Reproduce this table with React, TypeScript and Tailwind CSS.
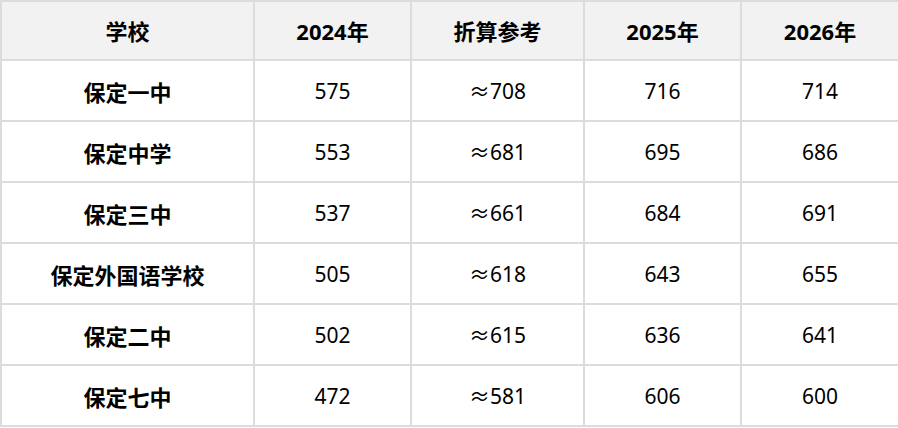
import React from 'react';

const rows = [
  ['保定一中', '575', '≈708', '716', '714'],
  ['保定中学', '553', '≈681', '695', '686'],
  ['保定三中', '537', '≈661', '684', '691'],
  ['保定外国语学校', '505', '≈618', '643', '655'],
  ['保定二中', '502', '≈615', '636', '641'],
  ['保定七中', '472', '≈581', '606', '600'],
];

const headers = ['学校', '2024年', '折算参考', '2025年', '2026年'];
const colWidths = ['w-[253px]', 'w-[157px]', 'w-[173px]', 'w-[157px]', 'w-[158px]'];

const App: React.FC = () => {
  return (
    <div
      className="w-[898px] h-[428px] bg-white text-black overflow-hidden"
      style={{ fontFamily: '"Noto Sans", "Noto Sans CJK SC", sans-serif' }}
    >
      <table className="w-[898px] border-collapse table-fixed">
        <colgroup>
          {colWidths.map((w, i) => (
            <col key={i} className={w} />
          ))}
        </colgroup>
        <thead>
          <tr className="h-[59px] bg-[#f2f2f2]">
            {headers.map((h) => (
              <th key={h} className="border-2 border-[#dcdcdc] p-0 pt-[2px] text-center text-[22px] font-bold">
                {h}
              </th>
            ))}
          </tr>
        </thead>
        <tbody>
          {rows.map((r) => (
            <tr key={r[0]} className="h-[61px]">
              {r.map((c, i) => (
                <td
                  key={i}
                  className={`border-2 border-[#dcdcdc] p-0 pt-[3px] text-center ${i === 0 ? 'text-[22px] font-bold' : 'text-[21px]'}`}
                >
                  {c}
                </td>
              ))}
            </tr>
          ))}
        </tbody>
      </table>
    </div>
  );
};

export default App;
